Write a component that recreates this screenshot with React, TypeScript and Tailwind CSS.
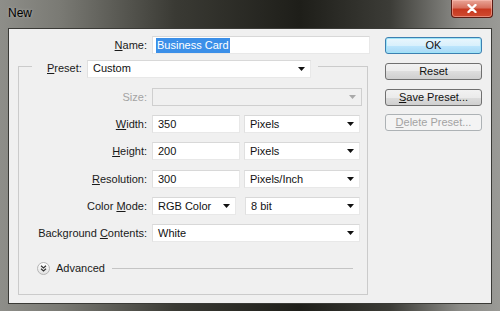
import React from "react";

const F = { fontFamily: '"Liberation Sans", Arial, sans-serif' };

function Arrow({ disabled = false }: { disabled?: boolean }) {
  return (
    <svg width="7" height="4" viewBox="0 0 7 4" className="shrink-0">
      <path d="M0 0 H7 L3.5 4 Z" fill={disabled ? "#a9a9a9" : "#111"} />
    </svg>
  );
}

function Select({ w, text, disabled = false }: { w: string; text: string; disabled?: boolean }) {
  return (
    <div
      className={`${w} h-[18px] flex items-center justify-between pl-[5px] pr-[5px] border ${
        disabled ? "bg-[#f0f0f0] border-[#cfcfcf]" : "bg-white border-t-[#d8d8d8] border-l-[#e0e0e0] border-r-[#e8e8e8] border-b-[#e8e8e8]"
      }`}
    >
      <span className="text-[11px] text-[#111] leading-none">{text}</span>
      <Arrow disabled={disabled} />
    </div>
  );
}

function Input({ w, text }: { w: string; text: string }) {
  return (
    <div className={`${w} h-[18px] flex items-center pl-[5px] bg-white border border-t-[#d8d8d8] border-l-[#e0e0e0] border-r-[#e8e8e8] border-b-[#e8e8e8]`}>
      <span className="text-[11px] text-[#111] leading-none">{text}</span>
    </div>
  );
}

function Label({ children, disabled = false }: { children: React.ReactNode; disabled?: boolean }) {
  return (
    <div className={`w-[128px] text-right text-[11px] leading-none ${disabled ? "text-[#a3a3a3]" : "text-[#1a1a1a]"}`}>
      {children}
    </div>
  );
}

function Btn({ children, ok = false, disabled = false, cls = "" }: { children: React.ReactNode; ok?: boolean; disabled?: boolean; cls?: string }) {
  const base = ok
    ? "border-[#3c7fb1] bg-[linear-gradient(#eaf6fd_0%,#d9f0fc_50%,#bee6fd_50%,#a7d9f5_100%)] shadow-[inset_0_0_0_1px_#9ee4f7] text-[#111]"
    : disabled
    ? "border-[#adb2b5] bg-[#f4f4f4] text-[#a3a3a3]"
    : "border-[#707070] bg-[linear-gradient(#f2f2f2_0%,#ebebeb_50%,#dddddd_50%,#cfcfcf_100%)] text-[#111]";
  return (
    <div className={`w-[97px] h-[17px] rounded-[3px] border flex items-center justify-center text-[11px] leading-none ${base} ${cls}`}>
      {children}
    </div>
  );
}

export default function App() {
  return (
    <div
      style={F}
      className="w-[500px] h-[311px] flex flex-col overflow-hidden bg-[linear-gradient(to_right,#8e8e89_0%,#7a7a74_12%,#3a3a34_35%,#1e1e19_60%,#3c3c37_78%,#8c8c88_92%,#9a9a96_100%)]"
    >
      {/* title bar */}
      <div className="h-[28px] shrink-0 flex items-start relative">
        <span className="ml-[8px] mt-[7px] text-[12px] text-black leading-none [text-shadow:0_0_3px_rgba(220,220,215,0.6)]">New</span>
        <div className="ml-auto mr-[7px] w-[42px] h-[18px] rounded-b-[4px] border border-t-0 border-[#5a1a12] bg-[linear-gradient(#e9a597_0%,#d7705e_45%,#c7381f_55%,#d04a30_100%)] flex items-center justify-center shadow-[inset_0_0_0_1px_rgba(255,200,190,0.5)]">
          <svg width="10" height="9" viewBox="0 0 10 9">
            <path d="M1.5 1 L8.5 8 M8.5 1 L1.5 8" stroke="#fff" strokeWidth="2.4" strokeLinecap="round" />
          </svg>
        </div>
      </div>

      {/* client area */}
      <div className="mx-[8px] h-[276px] shrink-0 border border-[#3a3a36] bg-[#f0f0f0] flex">
        {/* left */}
        <div className="w-[366px] shrink-0 flex flex-col pt-[7px]">
          <div className="flex items-center h-[18px]">
            <div className="w-[138px] text-right text-[11px] leading-none text-[#1a1a1a]">
              <span className="underline">N</span>ame:
            </div>
            <div className="ml-[5px] w-[218px] h-[18px] flex items-center pl-[3px] bg-white border border-t-[#d8d8d8] border-l-[#e0e0e0] border-r-[#e8e8e8] border-b-[#e8e8e8]">
              <span className="text-[11px] leading-none bg-[#3b8fe8] text-white px-[1px] py-[2px]">Business Card</span>
            </div>
          </div>

          {/* group box */}
          <div className="ml-[9px] mt-[12px] w-[350px] h-[229px] border border-[#cbcbcb] flex flex-col">
            <div className="-mt-[8px] ml-[13px] w-[286px] h-[19px] bg-[#f0f0f0] flex items-center px-[15px]">
              <span className="text-[11px] leading-none text-[#1a1a1a] w-[34px]">
                <span className="underline">P</span>reset:
              </span>
              <div className="ml-[6px]">
                <Select w="w-[224px]" text="Custom" />
              </div>
            </div>

            <div className="flex items-center mt-[10px]">
              <Label disabled>Size:</Label>
              <div className="ml-[5px]">
                <Select w="w-[210px]" text="" disabled />
              </div>
            </div>

            <div className="flex items-center mt-[9px]">
              <Label>
                <span className="underline">W</span>idth:
              </Label>
              <div className="ml-[5px] flex gap-[4px]">
                <Input w="w-[88px]" text="350" />
                <Select w="w-[116px]" text="Pixels" />
              </div>
            </div>

            <div className="flex items-center mt-[9px]">
              <Label>
                <span className="underline">H</span>eight:
              </Label>
              <div className="ml-[5px] flex gap-[4px]">
                <Input w="w-[88px]" text="200" />
                <Select w="w-[116px]" text="Pixels" />
              </div>
            </div>

            <div className="flex items-center mt-[10px]">
              <Label>
                <span className="underline">R</span>esolution:
              </Label>
              <div className="ml-[5px] flex gap-[4px]">
                <Input w="w-[88px]" text="300" />
                <Select w="w-[116px]" text="Pixels/Inch" />
              </div>
            </div>

            <div className="flex items-center mt-[9px]">
              <Label>
                Color <span className="underline">M</span>ode:
              </Label>
              <div className="ml-[5px] flex gap-[9px]">
                <Select w="w-[84px]" text="RGB Color" />
                <Select w="w-[115px]" text="8 bit" />
              </div>
            </div>

            <div className="flex items-center mt-[9px]">
              <Label>
                Background <span className="underline">C</span>ontents:
              </Label>
              <div className="ml-[5px]">
                <Select w="w-[208px]" text="White" />
              </div>
            </div>

            <div className="flex items-center mt-[19px] h-[14px] ml-[18px] mr-[14px]">
              <div className="w-[13px] h-[13px] rounded-full border border-[#b5b5b5] bg-[linear-gradient(#ffffff,#e2e2e2)] flex items-center justify-center">
                <svg width="7" height="7" viewBox="0 0 7 7">
                  <path d="M1 0.8 L3.5 3 L6 0.8 M1 3.8 L3.5 6 L6 3.8" stroke="#333" strokeWidth="1.2" fill="none" />
                </svg>
              </div>
              <span className="ml-[6px] text-[11px] leading-none text-[#1a1a1a]">Advanced</span>
              <div className="ml-[7px] flex-1 h-px bg-[#c4c4c4]" />
            </div>
          </div>
        </div>

        {/* right buttons */}
        <div className="ml-[10px] pt-[8px] flex flex-col">
          <Btn ok>OK</Btn>
          <Btn cls="mt-[9px]">Reset</Btn>
          <Btn cls="mt-[9px]">
            <span>
              <span className="underline">S</span>ave Preset...
            </span>
          </Btn>
          <Btn disabled cls="mt-[8px]">
            <span>
              <span className="underline">D</span>elete Preset...
            </span>
          </Btn>
        </div>
      </div>
    </div>
  );
}
